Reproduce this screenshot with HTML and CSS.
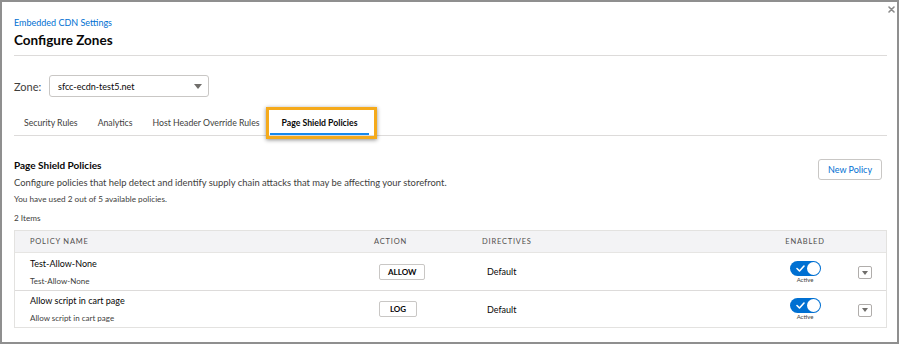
FILE: index.html
```html
<!DOCTYPE html>
<html>
<head>
<meta charset="utf-8">
<link rel="stylesheet" href="styles.css">
</head>
<body>
<div class="frame">
  <span class="close" aria-label="Close">
    <svg width="7" height="7" viewBox="0 0 7 7"><path d="M1 1 L6 6 M6 1 L1 6" stroke="#8a8a8a" stroke-width="1.6" stroke-linecap="round"/></svg>
  </span>
  <header class="page-head">
    <a class="crumb">Embedded CDN Settings</a>
    <h1 class="title">Configure Zones</h1>
  </header>

  <div class="zone-row">
    <label class="zone-label">Zone:</label>
    <div class="select">
      <span class="select-text">sfcc-ecdn-test5.net</span>
      <svg class="caret" width="8" height="5" viewBox="0 0 8 5"><path d="M0 0 H8 L4 5 Z" fill="#706e6b"/></svg>
    </div>
  </div>

  <nav class="tabs">
    <span class="tab">Security Rules</span>
    <span class="tab">Analytics</span>
    <span class="tab">Host Header Override Rules</span>
    <span class="tab active">Page Shield Policies</span>
  </nav>

  <section class="policies">
    <div class="sec-head">
      <div class="sec-text">
        <h2 class="sec-title">Page Shield Policies</h2>
        <p class="desc">Configure policies that help detect and identify supply chain attacks that may be affecting your storefront.</p>
        <p class="used">You have used 2 out of 5 available policies.</p>
        <p class="count">2 Items</p>
      </div>
      <button class="new-btn">New Policy</button>
    </div>

    <div class="table">
      <div class="row head">
        <div class="c c1">Policy Name</div>
        <div class="c c2">Action</div>
        <div class="c c3">Directives</div>
        <div class="c c4">Enabled</div>
        <div class="c c5"></div>
      </div>
      <div class="row">
        <div class="c c1"><div class="name">Test-Allow-None</div><div class="sub">Test-Allow-None</div></div>
        <div class="c c2"><span class="badge">ALLOW</span></div>
        <div class="c c3">Default</div>
        <div class="c c4">
          <span class="toggle"><svg class="check" width="9" height="7" viewBox="0 0 9 7"><path d="M1 3.5 L3.5 6 L8 1" fill="none" stroke="#fff" stroke-width="1.6" stroke-linecap="round" stroke-linejoin="round"/></svg><span class="knob"></span></span>
          <span class="tlabel">Active</span>
        </div>
        <div class="c c5"><span class="menu"><svg width="6" height="4" viewBox="0 0 6 4"><path d="M0 0 H6 L3 4 Z" fill="#706e6b"/></svg></span></div>
      </div>
      <div class="row">
        <div class="c c1"><div class="name">Allow script in cart page</div><div class="sub">Allow script in cart page</div></div>
        <div class="c c2"><span class="badge">LOG</span></div>
        <div class="c c3">Default</div>
        <div class="c c4">
          <span class="toggle"><svg class="check" width="9" height="7" viewBox="0 0 9 7"><path d="M1 3.5 L3.5 6 L8 1" fill="none" stroke="#fff" stroke-width="1.6" stroke-linecap="round" stroke-linejoin="round"/></svg><span class="knob"></span></span>
          <span class="tlabel">Active</span>
        </div>
        <div class="c c5"><span class="menu"><svg width="6" height="4" viewBox="0 0 6 4"><path d="M0 0 H6 L3 4 Z" fill="#706e6b"/></svg></span></div>
      </div>
    </div>
  </section>
</div>
</body>
</html>
```

FILE: styles.css
```css
* { box-sizing: border-box; }
html, body { margin: 0; padding: 0; background: #fff; }
body {
  font-family: "Lato", "Open Sans", sans-serif;
  color: #080707;
  width: 900px;
  height: 345px;
  overflow: hidden;
}
.frame {
  position: relative;
  width: 899px;
  height: 344px;
  border: 2px solid #8f8f8f;
  padding: 14px 10px 0 12px;
  background: #fff;
}
.close {
  position: absolute;
  top: 4px;
  right: 2px;
  width: 7px;
  height: 7px;
  display: block;
}
.close svg { display: block; }

.page-head {
  border-bottom: 1px solid #dddbda;
  padding-bottom: 6px;
}
.crumb {
  display: block;
  color: #0070d2;
  font-size: 9px;
  line-height: 14px;
}
.title {
  margin: 1px 0 0;
  font-size: 13.5px;
  line-height: 18px;
  font-weight: 700;
  color: #080707;
}

.zone-row {
  display: flex;
  align-items: center;
  margin-top: 19px;
  height: 22px;
}
.zone-label {
  font-size: 11px;
  color: #3e3e3c;
  width: 35px;
}
.select {
  width: 160px;
  height: 22px;
  border: 1px solid #c9c7c5;
  border-radius: 3px;
  display: flex;
  align-items: center;
  justify-content: space-between;
  padding: 0 6px 0 8px;
}
.select-text { font-size: 9px; color: #080707; }
.caret { display: block; }

.tabs {
  display: flex;
  margin-top: 14px;
  border-bottom: 1px solid #dddbda;
  height: 25px;
}
.tab {
  padding: 0 10px;
  font-size: 8.7px;
  line-height: 24px;
  color: #3e3e3c;
  height: 24px;
}
.tab.active {
  font-weight: 700;
  color: #080707;
  width: 103px;
  text-align: center;
  padding: 0 3px 0 0;
  position: relative;
  background: linear-gradient(#1589ee, #1589ee) no-repeat 0 100% / 99px 2px;
  outline: 3px solid #f5aa1b;
  outline-offset: 1px;
}
.tab.active::after {
  content: "";
  position: absolute;
  left: -4px; right: -4px; top: -4px; bottom: -4px;
  box-shadow: 0 1px 4px rgba(0,0,0,0.45);
  pointer-events: none;
}

.policies { padding-top: 21px; }
.sec-head {
  display: flex;
  justify-content: space-between;
  align-items: flex-start;
}
.sec-title {
  margin: 0;
  font-size: 10px;
  line-height: 16px;
  font-weight: 700;
}
.desc, .used, .count {
  margin: 0;
  color: #3e3e3c;
  line-height: 16px;
}
.desc { font-size: 9.4px; margin-top: 2px; }
.used { font-size: 8.2px; }
.count { font-size: 8.2px; margin-top: 3px; }
.new-btn {
  margin: 2px 5px 0 0;
  width: 64px;
  height: 21px;
  border: 1px solid #c9c7c5;
  border-radius: 3px;
  background: #fff;
  color: #0070d2;
  font-family: inherit;
  font-size: 9px;
  padding: 0;
}

.table {
  margin-top: 4px;
  border: 1px solid #e3e2e0;
  width: 873px;
}
.row {
  display: grid;
  grid-template-columns: 354px 108px 283px 90px 1fr;
  height: 37px;
  align-items: center;
  border-top: 1px solid #dddbda;
}
.row.head {
  height: 22px;
  background: #f3f3f5;
  border-top: none;
  border-bottom: 1px solid #e6e5e3;
}
.row.head + .row { border-top: none; }
.head .c {
  font-size: 7.5px;
  text-transform: uppercase;
  letter-spacing: 0.8px;
  color: #514f4d;
  padding-left: 5px;
}
.head .c1 { padding-left: 15px; }
.head .c4 { padding-left: 0; text-align: center; }
.c { font-size: 9px; color: #080707; }
.c1 { padding-left: 15px; }
.c2, .c3 { padding-left: 10px; }
.name { font-size: 9px; line-height: 14px; color: #080707; }
.sub { font-size: 8px; line-height: 12px; margin-top: 4px; color: #3e3e3c; }
.badge {
  display: inline-block;
  border: 1px solid #c9c7c5;
  border-radius: 2px;
  font-size: 8px;
  font-weight: 700;
  letter-spacing: 0;
  line-height: 14px;
  padding: 0 8px;
  color: #080707;
  min-width: 38px;
  text-align: center;
}
.c4 {
  display: flex;
  flex-direction: column;
  align-items: center;
  padding-top: 0;
}
.toggle {
  width: 31px;
  height: 15px;
  border-radius: 8px;
  background: #0070d2;
  display: flex;
  align-items: center;
  justify-content: space-between;
  padding: 0 1px 0 6px;
}
.check { display: block; }
.knob {
  width: 13px;
  height: 13px;
  border-radius: 50%;
  background: #fff;
}
.tlabel {
  font-size: 6px;
  line-height: 7px;
  color: #3e3e3c;
}
.c5 { padding-left: 8px; }
.menu {
  width: 14px;
  height: 13px;
  border: 1px solid #b0adab;
  border-radius: 2px;
  display: flex;
  align-items: center;
  justify-content: center;
  margin-top: 2px;
}
.menu svg { display: block; }
```
